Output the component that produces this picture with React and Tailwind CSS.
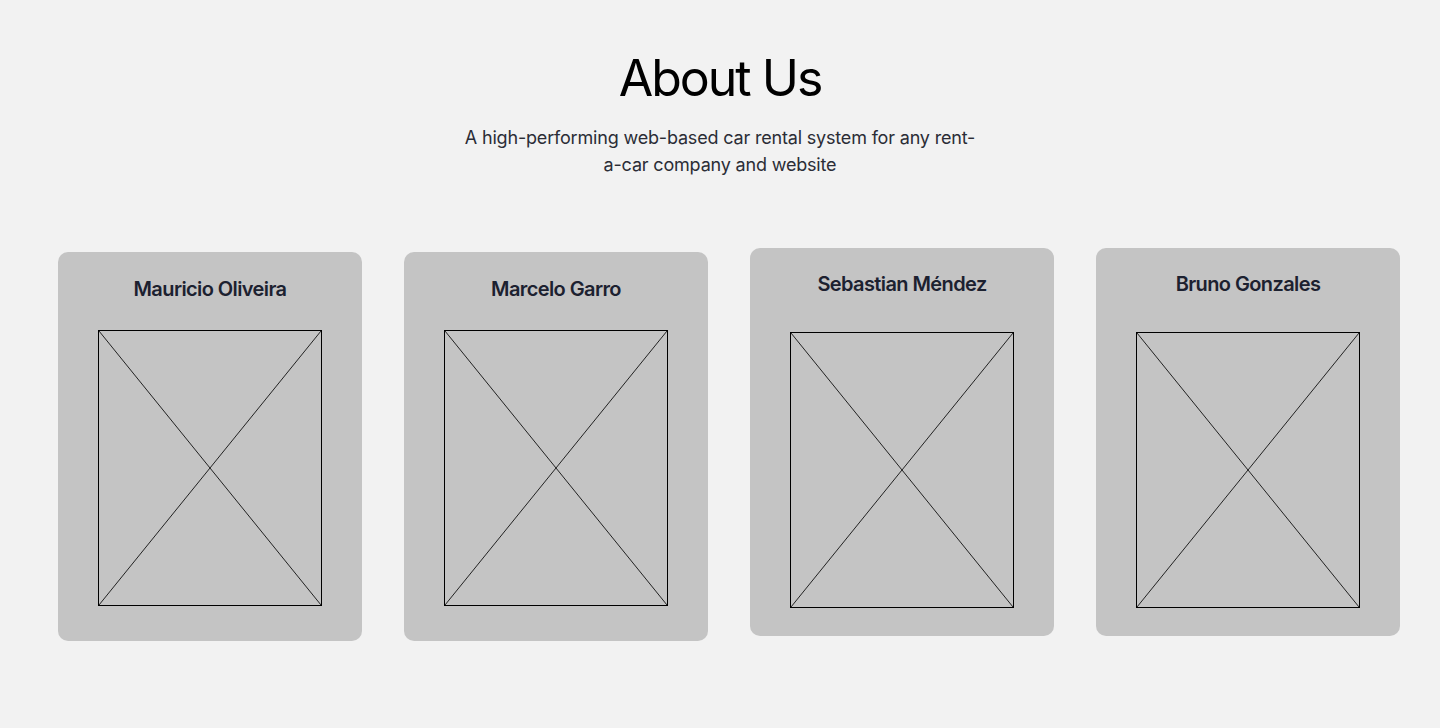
import React from "react";

// Membros da equipe exibidos nos cards
const TEAM = [
  { name: "Mauricio Oliveira", card: "mt-[4px] pt-[23px] pb-[35px]", photo: "mt-[27px]" },
  { name: "Marcelo Garro", card: "mt-[4px] pt-[23px] pb-[35px]", photo: "mt-[27px]" },
  { name: "Sebastian Méndez", card: "pt-[22px] pb-[28px]", photo: "mt-[34px]" },
  { name: "Bruno Gonzales", card: "pt-[22px] pb-[28px]", photo: "mt-[34px]" },
];

function PhotoPlaceholder({ className }) {
  return (
    <div className={`w-[224px] h-[276px] border border-black ${className}`}>
      <svg className="w-full h-full block" viewBox="0 0 100 100" preserveAspectRatio="none">
        <line x1="0" y1="0" x2="100" y2="100" stroke="#222" strokeWidth="1" vectorEffect="non-scaling-stroke" />
        <line x1="100" y1="0" x2="0" y2="100" stroke="#222" strokeWidth="1" vectorEffect="non-scaling-stroke" />
      </svg>
    </div>
  );
}

function MemberCard({ member }) {
  return (
    <div className={`w-[304px] shrink-0 rounded-[10px] bg-[#c4c4c4] flex flex-col items-center ${member.card}`}>
      <h3 className="text-[20px] leading-[28px] font-semibold tracking-[-0.03em] text-[#1c2130]">
        {member.name}
      </h3>
      <PhotoPlaceholder className={member.photo} />
    </div>
  );
}

export default function App() {
  return (
    <div
      className="min-h-[728px] w-full bg-[#f2f2f2] flex flex-col items-center"
      style={{ fontFamily: "Inter, 'Noto Sans', sans-serif" }}
    >
      <h1 className="mt-[52px] text-[50px] leading-[52px] font-normal tracking-[-0.04em] text-black">
        About Us
      </h1>
      <p className="mt-[20px] w-[518px] text-center text-[18px] leading-[27px] tracking-[-0.01em] text-[#2b2d36]">
        A high-performing web-based car rental system for any rent-a-car company and website
      </p>
      <div className="mt-[70px] w-full px-[58px] flex items-start gap-[42px]">
        {TEAM.map((m) => (
          <MemberCard key={m.name} member={m} />
        ))}
      </div>
    </div>
  );
}
